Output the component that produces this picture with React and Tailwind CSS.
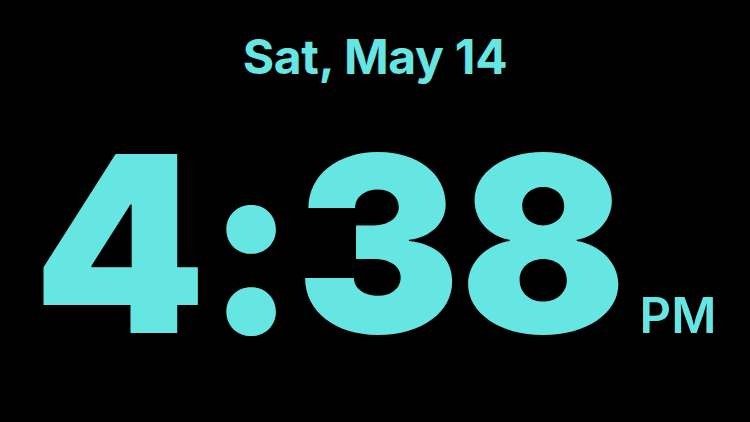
export default function App() {
  return (
    <div className="w-[750px] h-[422px] bg-black text-[#66e6e2] flex flex-col items-center overflow-hidden" style={{ fontFamily: "Inter, 'Liberation Sans', sans-serif" }}>
      <div className="mt-[27px] text-[48px] leading-[60px] font-bold tracking-[-0.3px]">Sat, May 14</div>
      <div className="mt-[47px] flex items-baseline">
        <span className="text-[246px] leading-[220px] font-black tracking-[-1px]">4:38</span>
        <span className="ml-[14px] text-[49px] leading-none font-semibold">PM</span>
      </div>
    </div>
  );
}
